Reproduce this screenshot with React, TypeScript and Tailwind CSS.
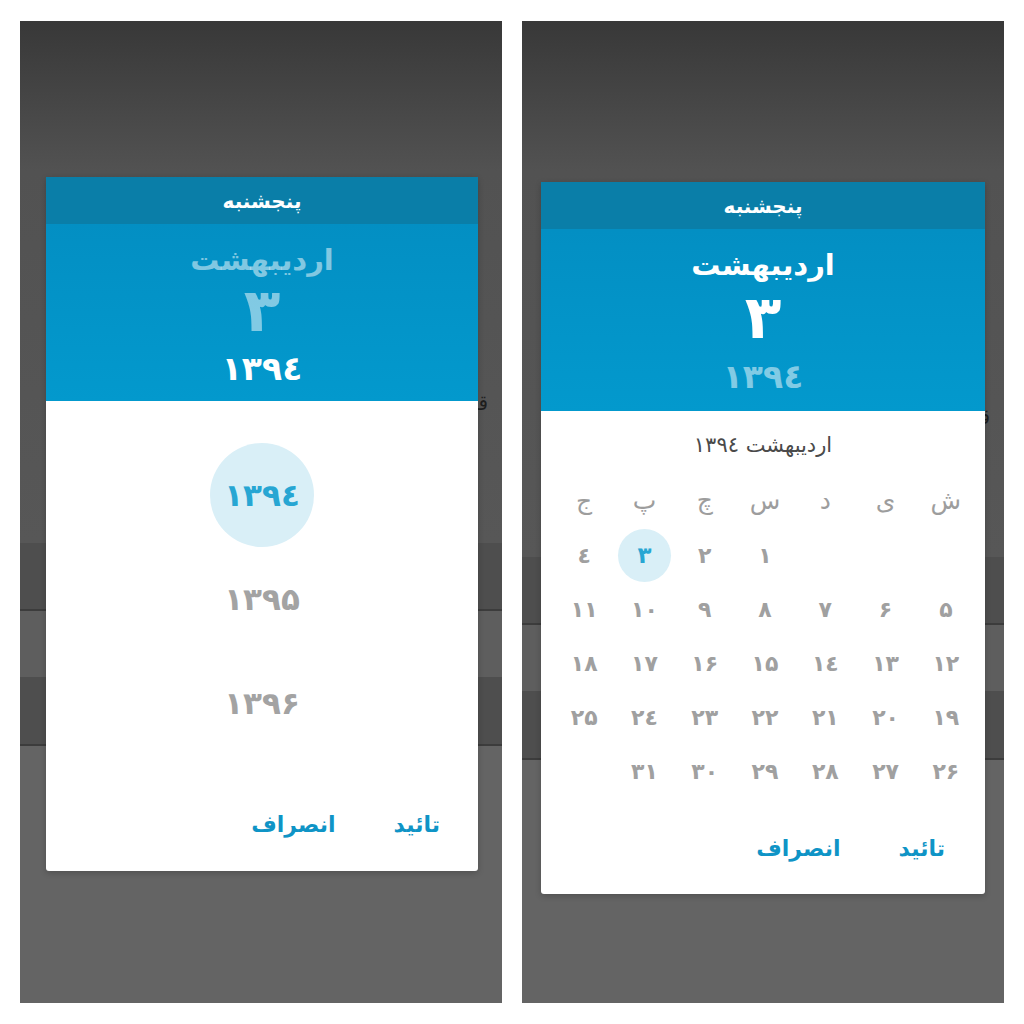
import type { ReactNode } from "react";

const FA = "۰۱۲۳٤۵۶۷۸۹";
const fa = (n: number | string) => String(n).replace(/\d/g, (d) => FA[+d]);

const WEEK = ["ش", "ی", "د", "س", "چ", "پ", "ج"];

type ScreenProps = {
  bandTop: number;
  dialogTop: number;
  dialogLeft: number;
  dialogWidth: number;
  children: ReactNode;
};

function Screen({ bandTop, dialogTop, dialogLeft, dialogWidth, children }: ScreenProps) {
  return (
    <div className="relative flex h-[982px] w-[482px] flex-col overflow-hidden bg-[#646464]">
      {/* dimmed app behind the dialog */}
      <div
        className="flex flex-col bg-[linear-gradient(to_bottom,#383838_0px,#525252_150px,#575757_100%)]"
        style={{ height: bandTop }}
      >
        <div
          dir="rtl"
          className="pr-[14px] text-[20px] leading-none text-[#1e1e1e]"
          style={{ marginTop: bandTop - 150 }}
        >
          قیمت
        </div>
      </div>
      <div className="h-[68px] border-b-2 border-[#3c3c3c] bg-[#4e4e4e]" />
      <div className="h-[66px] bg-[#5e5e5e]" />
      <div className="h-[69px] border-b-2 border-[#3c3c3c] bg-[#4e4e4e]" />
      <div className="flex-1 bg-[#646464]" />

      <div
        className="absolute overflow-hidden rounded-b-[3px] bg-white shadow-[0_2px_6px_rgba(0,0,0,0.2)]"
        style={{ top: dialogTop, left: dialogLeft, width: dialogWidth }}
      >
        {children}
      </div>
    </div>
  );
}

function Header({ active }: { active: "year" | "day" }) {
  const dim = "text-white/50";
  const isDay = active === "day";
  return (
    <div dir="rtl">
      <div className="flex h-[47px] items-center justify-center bg-[#0a7ea8] text-[20px] font-bold text-white">
        پنجشنبه
      </div>
      <div
        className={`flex flex-col items-center bg-[linear-gradient(to_bottom,#038fc3,#0399cd)] ${
          isDay ? "h-[182px]" : "h-[177px]"
        }`}
      >
        <div
          className={`mt-[14px] flex h-[44px] items-center text-[29px] font-bold leading-none ${
            isDay ? "text-white" : dim
          }`}
        >
          اردیبهشت
        </div>
        <div
          className={`flex h-[56px] items-center text-[60px] font-bold leading-none ${
            isDay ? "mt-[2px] text-white" : dim
          }`}
        >
          {fa(3)}
        </div>
        <div
          className={`flex h-[44px] items-center text-[33px] font-bold leading-none tracking-[-2px] ${
            isDay ? "mt-[9px] " + dim : "mt-[8px] text-white"
          }`}
        >
          {fa(1394)}
        </div>
      </div>
    </div>
  );
}

function Buttons() {
  return (
    <div
      dir="rtl"
      className="flex h-[48px] items-center gap-[58px] pr-[38px] text-[22px] font-bold text-[#0f94c6]"
    >
      <span>تائید</span>
      <span>انصراف</span>
    </div>
  );
}

function YearPicker() {
  return (
    <div className="flex flex-col">
      <Header active="year" />
      <div className="flex h-[470px] flex-col items-center pt-[42px]">
        {[1394, 1395, 1396].map((y, i) => (
          <div key={y} className="flex h-[104px] items-center justify-center">
            {i === 0 ? (
              <div className="flex h-[104px] w-[104px] items-center justify-center rounded-full bg-[#d9eff7] text-[31px] font-bold tracking-[-2px] text-[#27a6d3]">
                {fa(y)}
              </div>
            ) : (
              <span className="text-[31px] font-bold tracking-[-2px] text-[#a3a3a3]">{fa(y)}</span>
            )}
          </div>
        ))}
        <div className="flex-1" />
        <div className="mb-[23px] w-full">
          <Buttons />
        </div>
      </div>
    </div>
  );
}

function DayPicker() {
  const cells: (number | null)[] = [null, null, null];
  for (let d = 1; d <= 31; d++) cells.push(d);
  while (cells.length % 7) cells.push(null);

  return (
    <div className="flex flex-col">
      <Header active="day" />
      <div className="flex h-[483px] flex-col">
        <div dir="rtl" className="mt-[15px] flex h-[40px] items-center justify-center text-[21px] text-[#4a4a4a]">
          اردیبهشت {fa(1394)}
        </div>
        <div dir="rtl" className="mt-[8px] grid grid-cols-7 pl-[13px] pr-[9px]">
          {WEEK.map((w) => (
            <div key={w} className="flex h-[54px] items-center justify-center text-[25px] text-[#9d9d9d]">
              {w}
            </div>
          ))}
          {cells.map((d, i) => (
            <div key={i} className="flex h-[54px] items-center justify-center">
              {d === 3 ? (
                <div className="flex h-[53px] w-[53px] items-center justify-center rounded-full bg-[#d9eff7] text-[23px] font-bold text-[#27a6d3]">
                  {fa(d)}
                </div>
              ) : d ? (
                <span className="text-[22px] font-bold tracking-[-1.5px] text-[#a0a0a0]">{fa(d)}</span>
              ) : null}
            </div>
          ))}
        </div>
        <div className="flex-1" />
        <div className="mb-[22px] pr-[2px]">
          <Buttons />
        </div>
      </div>
    </div>
  );
}

export default function App() {
  return (
    <div className="flex h-[1024px] w-[1024px] gap-[20px] bg-white pl-[20px] pt-[21px] font-['DejaVu_Sans',sans-serif]">
      <Screen bandTop={522} dialogTop={156} dialogLeft={26} dialogWidth={432}>
        <YearPicker />
      </Screen>
      <Screen bandTop={536} dialogTop={161} dialogLeft={19} dialogWidth={444}>
        <DayPicker />
      </Screen>
    </div>
  );
}
